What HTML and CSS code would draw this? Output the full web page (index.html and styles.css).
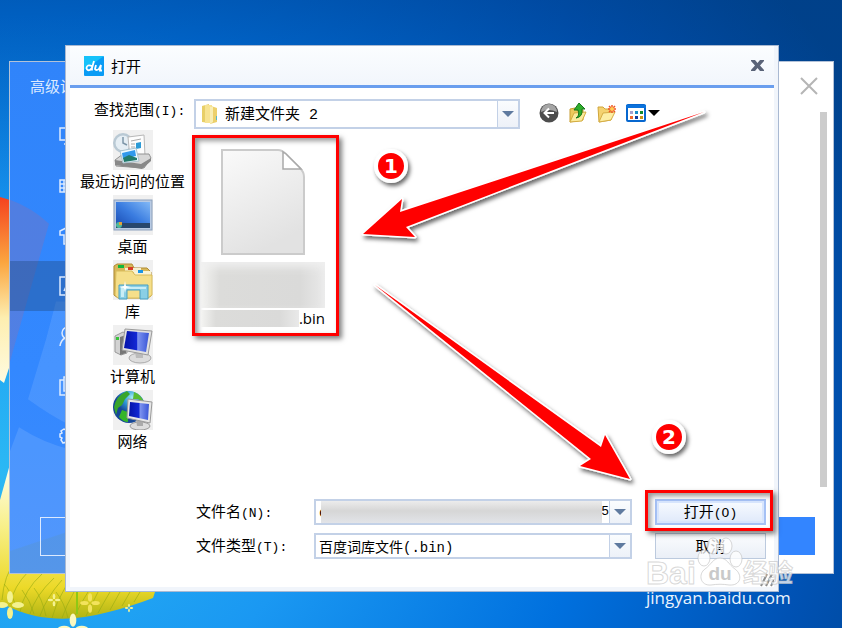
FILE: index.html
```html
<!DOCTYPE html>
<html lang="zh-CN">
<head>
    <meta charset="UTF-8">
    <meta name="viewport" content="width=device-width, initial-scale=1.0">
    <title>打开</title>
    <link rel="stylesheet" href="styles.css">
</head>
<body>
    <!-- Wallpaper -->
    <svg class="wallpaper" viewBox="0 0 842 628" preserveAspectRatio="xMinYMin meet" aria-hidden="true">
        <defs>
            <linearGradient id="flame" x1="0" y1="0" x2="0" y2="1">
                <stop offset="0" stop-color="#f5421f"/>
                <stop offset=".35" stop-color="#fba53f"/>
                <stop offset=".65" stop-color="#fdeeb0"/>
                <stop offset="1" stop-color="#fffbe0"/>
            </linearGradient>
            <linearGradient id="grass" x1="0" y1="0" x2="0" y2="1">
                <stop offset="0" stop-color="#fffef0"/>
                <stop offset=".4" stop-color="#f8f08a"/>
                <stop offset=".8" stop-color="#ecd928"/>
                <stop offset="1" stop-color="#b0b414"/>
            </linearGradient>
            <g id="flower">
                <ellipse cy="-8" rx="3" ry="6"/>
                <ellipse cy="8" rx="3" ry="6"/>
                <ellipse cx="-8" rx="6" ry="3"/>
                <ellipse cx="8" rx="6" ry="3"/>
            </g>
        </defs>
        <path d="M0 197Q30 205 49 223L10 365L4 383L0 380Z" fill="url(#flame)"/>
        <path d="M0 500L10 464L70 500L155 592L153 598C120 610 80 622 50 618C25 616 8 606 0 603Z" fill="url(#grass)"/>
        <g fill="none" stroke="#96aa12" stroke-width="1" opacity=".6">
            <path d="M2 600Q4 575 16 560M10 604Q14 586 28 572M20 612Q24 590 42 574M30 614Q35 596 54 578M40 616Q46 598 62 580M52 618Q56 602 66 586M62 618Q66 606 74 592M74 618Q80 604 88 592M86 616Q92 604 98 592M98 613Q104 602 110 592M110 610Q115 601 120 592M122 606L130 592M134 602L140 592M16 606Q10 590 4 584M34 614Q30 600 22 590M46 616Q42 598 34 588M68 618Q64 602 56 592"/>
        </g>
        <path d="M77 592V614" stroke="#8fc814" stroke-width="2"/>
        <g fill="#f4f290">
            <use href="#flower" x="10" y="605"/>
            <use href="#flower" fill="#f3e35c" transform="translate(90 603) scale(.7)"/>
            <use href="#flower" transform="translate(54 600) scale(.45)"/>
            <use href="#flower" transform="translate(129 608) scale(.3)"/>
            <use href="#flower" fill="#faf8c0" transform="translate(73 629) scale(1.1)"/>
        </g>
    </svg>

    <!-- Settings window behind the dialog -->
    <div class="settings">
        <div class="settings-side">
            <svg class="side-pattern" viewBox="0 0 150 512" preserveAspectRatio="none" aria-hidden="true">
                <path d="M0 138Q22 146 39 162L0 300Z" fill="#f05a5a" opacity=".16"/>
                <path d="M36 278L18 338Q40 354 60 364V240H46Z" fill="#fff" opacity=".1"/>
                <path d="M9 366Q34 382 60 388V512H0V390Z" fill="#fff" opacity=".11"/>
                <path d="M0 490L60 470V512H0Z" fill="#6c9860" opacity=".12"/>
            </svg>
            <h2>高级设置</h2>
            <nav>
                <a href="#" aria-label="常规"><svg viewBox="0 0 20 20"><rect x="1" y="2" width="18" height="12"/><path d="M7 18L9 14M5 18H15"/></svg></a>
                <a href="#" aria-label="按键"><svg viewBox="0 0 20 20"><rect x="1" y="4" width="18" height="12"/><path d="M1 8H19M1 12H19M5 4V16M10 4V16M15 4V16"/></svg></a>
                <a href="#" aria-label="皮肤"><svg viewBox="0 0 20 20"><path d="M7 2L1 5V9H5V18H15V9H19V5L13 2Q10 5 7 2Z"/></svg></a>
                <a href="#" aria-label="词库" class="active"><svg viewBox="0 0 20 20"><rect x="1" y="1" width="18" height="18"/><path d="M5 15L10 4L15 15M7 11H13"/></svg></a>
                <a href="#" aria-label="账户"><svg viewBox="0 0 20 20"><circle cx="9" cy="7" r="6"/><path d="M1 20Q2 14 6 12M17 20Q16 14 12 12"/></svg></a>
                <a href="#" aria-label="辅助"><svg viewBox="0 0 20 20"><path d="M5 4H1V19H15V15"/><rect x="5" y="1" width="13" height="14"/></svg></a>
                <a href="#" aria-label="高级"><svg viewBox="0 0 20 20"><path d="M7 1H13V4L16 6L19 8V12L16 14V17L13 19H7V16L4 17L2 14L3 12L1 11V8L3 7L2 5L5 3L7 4Z"/></svg></a>
            </nav>
            <button type="button" class="side-button" aria-label="恢复默认"></button>
        </div>
        <div class="settings-main">
            <button type="button" class="settings-close" aria-label="关闭">
                <svg viewBox="0 0 18 18"><path d="M1 1L17 17M17 1L1 17"/></svg>
            </button>
            <div class="scrollbar"></div>
            <button type="button" class="settings-ok" aria-label="确定"></button>
        </div>
    </div>

    <!-- Open file dialog -->
    <form class="dialog" onsubmit="return false">
        <header class="titlebar">
            <svg class="logo" viewBox="0 0 20 20" aria-hidden="true">
                <rect width="20" height="20" rx="1" fill="#0a9cf5"/>
                <path d="M0 0H20L0 14Z" fill="#16c2fa"/>
                <g fill="none" stroke="#fff" stroke-width="1.8">
                    <path d="M8 10Q3 8 2.500 12Q3 15 6 14L8 12L10 5M8 10V14.500"/>
                    <path d="M12 9L11 13Q12 15 15 13L17 9L16 14.500H18"/>
                </g>
            </svg>
            <h1>打开</h1>
            <button type="button" class="close" aria-label="关闭">
                <svg viewBox="0 0 13 11"><path d="M0 0H4L6.500 3L9 0H13V1L9 5.500L13 10V11H9L6.500 8L4 11H0V10L4 5.500L0 1Z"/></svg>
            </button>
        </header>

        <div class="lookin">
            <label for="folder">查找范围<span class="key">(I):</span></label>
            <div class="combo">
                <svg class="folder" viewBox="0 0 18 20" aria-hidden="true">
                    <path d="M1 2L8 0V19L1 18Z" fill="#e8cf68"/>
                    <path d="M4 1H11V19H4Z" fill="#f7e392"/>
                    <path d="M10 2L16 4V18L9 20Z" fill="#ecd06c"/>
                    <path d="M9 3L12 2V18L9 20Z" fill="#f8edb4"/>
                    <path d="M15 12H16V16H15Z" fill="#57b7c9"/>
                </svg>
                <select id="folder"><option>新建文件夹 2</option></select>
                <span class="arrow"></span>
            </div>
            <div class="tools">
                <button type="button" aria-label="后退">
                    <svg viewBox="0 0 20 20">
                        <circle cx="10" cy="10" r="9.500" fill="#4d4d4d"/>
                        <path d="M2 9A8 8 0 0 1 18 9Q10 5 2 9Z" fill="#a5a5a5"/>
                        <path d="M15 10H6M10 5.500L5.500 10L10 14.500" fill="none" stroke="#fff" stroke-width="2"/>
                    </svg>
                </button>
                <button type="button" aria-label="向上一级">
                    <svg viewBox="0 0 20 20">
                        <path d="M2 6L7 5L8 7H15V17L2 19Z" fill="#edc95b" stroke="#c79d32"/>
                        <path d="M2 19L6 10L18 9L14 18Z" fill="#fbeb9d" stroke="#d3ac40"/>
                        <path d="M8 15Q12 13 10 7H6L11 0L17 6H14Q15 14 8 15Z" fill="#2fae2c" stroke="#16751a"/>
                    </svg>
                </button>
                <button type="button" aria-label="新建文件夹">
                    <svg viewBox="0 0 20 20">
                        <path d="M1 4H6L8 6H14V17L2 19Z" fill="#f4d270" stroke="#d0a53a"/>
                        <path d="M2 19L6 10L18 9L14 17Z" fill="#fdeea4" stroke="#d6ae45"/>
                        <path d="M15 2V10M11 6H19M12 3L18 9M18 3L12 9" stroke="#ef5521" stroke-width="1.500"/>
                        <circle cx="15" cy="6" r="2" fill="#ffcd55"/>
                    </svg>
                </button>
                <button type="button" class="view" aria-label="查看">
                    <svg viewBox="0 0 20 20">
                        <rect x="1" y="2" width="18" height="16" rx="1" fill="#fff" stroke="#0767cf" stroke-width="2"/>
                        <path d="M0 2H20V5H0Z" fill="#0b72dc"/>
                        <path d="M4 8H7V11H4Z" fill="#a6a0cd"/><path d="M9 8H12V11H9Z" fill="#178cc8"/><path d="M14 8H17V11H14Z" fill="#138a31"/>
                        <path d="M4 13H7V16H4Z" fill="#f0682d"/><path d="M9 13H12V16H9Z" fill="#123a9e"/><path d="M14 13H17V16H14Z" fill="#c9951d"/>
                    </svg>
                    <span class="caret"></span>
                </button>
            </div>
        </div>

        <div class="browser">
            <nav class="places">
                <a href="#">
                    <svg viewBox="0 0 40 40">
                        <circle cx="10" cy="13" r="10" fill="#b9c9d4"/><circle cx="10" cy="13" r="7.500" fill="#e5eef4"/>
                        <path d="M10 7V13L14 15" fill="none" stroke="#7d96a8" stroke-width="1.500"/>
                        <path d="M15 7L31 5L32 26L17 28Z" fill="#fdfdfd" stroke="#b8b8b8"/>
                        <path d="M18 11L28 9M18 14H22M18 17H22" stroke="#aaa"/>
                        <path d="M23 13L28 12V18L23 19Z" fill="#2d9bd6"/>
                        <path d="M2 30L10 24H36L38 28L31 38L3 36Z" fill="#d7d7d7" stroke="#929292"/>
                        <path d="M2 30L28 34L38 28V31L29 39L2 35Z" fill="#888"/>
                        <path d="M7 21L23 18L26 31L10 33Z" fill="#effaff" stroke="#a9c3d0"/>
                        <path d="M9 23L22 20L23 26L10 29Z" fill="#3199ec"/><path d="M10 28L16 25L24 28V30L11 32Z" fill="#217b6c"/>
                    </svg>
                    最近访问的位置
                </a>
                <a href="#">
                    <svg viewBox="0 0 40 40">
                        <defs><linearGradient id="desk" x1="0" y1="1" x2="1" y2="0"><stop offset="0" stop-color="#1648b0"/><stop offset=".5" stop-color="#3a7ce0"/><stop offset="1" stop-color="#81b8f6"/></linearGradient></defs>
                        <rect x="1" y="5" width="38" height="30" fill="#b9cbe4" stroke="#8ea2bd"/>
                        <rect x="3" y="7" width="34" height="26" fill="url(#desk)"/>
                        <path d="M3 28H37V33H3Z" fill="#28476d"/>
                        <circle cx="6" cy="30" r="3" fill="#4fb99b"/><path d="M6 27H9V30H6Z" fill="#e1a33c"/>
                    </svg>
                    桌面
                </a>
                <a href="#">
                    <svg viewBox="0 0 40 40">
                        <path d="M1 6L4 4H19L21 8H34L38 12V36L34 38H5L1 35Z" fill="#d7b75a" stroke="#b18c32"/>
                        <path d="M5 5H11V8H5Z" fill="#12b83c"/><path d="M12 8H28V12H12Z" fill="#f5efcf"/><path d="M15 7H20V10H15Z" fill="#d83c25"/>
                        <path d="M21 11H38V15H21Z" fill="#f9f3d4"/><path d="M25 10H30V13H25Z" fill="#1a95e5"/>
                        <path d="M3 11L19 11L22 15H39V35L35 38H5L2 35Z" fill="#f5df8a" stroke="#d8bb5b"/>
                        <path d="M6 25H35V39H27V30H14V39H6Z" fill="#8acfe5" stroke="#499fc1"/>
                        <path d="M8 27H33V29H11V37H8Z" fill="#c9edf6"/>
                        <path d="M12 21L13 26L18 27L13 28L12 33L11 28L6 27L11 26Z" fill="#fff"/>
                    </svg>
                    库
                </a>
                <a href="#">
                    <svg viewBox="0 0 40 40">
                        <defs><linearGradient id="screen" x1="0" y1="0" x2="1" y2="0"><stop offset="0" stop-color="#0513a8"/><stop offset=".5" stop-color="#1228d4"/><stop offset=".55" stop-color="#7d93ef"/><stop offset="1" stop-color="#3855d7"/></linearGradient></defs>
                        <path d="M2 11L10 7L14 9V28L8 30L2 27Z" fill="#d2d2d2" stroke="#999"/>
                        <path d="M7 12L13 10V28L7 30Z" fill="#777"/><path d="M3 12H6V15H3Z" fill="#39c43a"/>
                        <ellipse cx="27" cy="33" rx="11" ry="5" fill="#ddd" stroke="#aaa"/>
                        <path d="M22 27H30V33H23Z" fill="#bbb"/>
                        <path d="M12 4L39 6L35 30L9 25Z" fill="#e1e1e1" stroke="#9a9a9a"/>
                        <path d="M14 6L36 8L33 27L11 23Z" fill="url(#screen)"/>
                    </svg>
                    计算机
                </a>
                <a href="#">
                    <svg viewBox="0 0 40 40">
                        <defs><radialGradient id="globe" cx=".6" cy=".2"><stop offset="0" stop-color="#a4edf4"/><stop offset=".5" stop-color="#2f9bd8"/><stop offset="1" stop-color="#164796"/></radialGradient></defs>
                        <circle cx="16" cy="17" r="16" fill="url(#globe)"/>
                        <path d="M1 17Q3 6 14 1L17 4L12 9L9 15L5 18L3 25Z" fill="#38a52b"/><path d="M21 2Q29 5 31 13L25 9L20 9Z" fill="#5abc32"/><path d="M9 20L15 22V32Q10 32 6 27Z" fill="#36b529"/>
                        <ellipse cx="27" cy="36" rx="10" ry="4" fill="#ddd" stroke="#999"/><path d="M23 29H30V36H24Z" fill="#aaa"/>
                        <path d="M15 9L39 12L37 33L14 28Z" fill="#e7e7e7" stroke="#999"/><path d="M17 12L36 14L35 30L16 26Z" fill="url(#screen)"/>
                    </svg>
                    网络
                </a>
            </nav>
            <div class="files">
                <button type="button" class="file">
                    <svg viewBox="0 0 86 108" aria-hidden="true">
                        <defs><linearGradient id="paper" x1="0" y1="0" x2=".4" y2="1"><stop offset="0" stop-color="#fafafa"/><stop offset="1" stop-color="#e2e2e2"/></linearGradient></defs>
                        <path d="M2 2H58Q62 2 66 6L80 20Q84 24 84 29V106H2Z" fill="url(#paper)" stroke="#cbcbcb" stroke-width="2"/>
                        <path d="M63 4V21H81Q79 19 66 6Z" fill="#fff" stroke="#a9a9a9" stroke-width="1.500"/>
                    </svg>
                    <span class="smudge smudge-name"></span>
                    <span class="file-end"><span class="smudge"></span>.bin</span>
                </button>
            </div>
        </div>

        <div class="fields">
            <label for="filename">文件名<span class="key">(N):</span></label>
            <div class="combo">
                <input type="text" id="filename" value="c">
                <span class="tail">25</span>
                <span class="smudge-input"></span>
                <span class="arrow"></span>
            </div>
            <div class="open-cell">
                <button type="submit" class="btn btn-open">打开<span class="key">(O)</span></button>
                <span class="frame"></span>
            </div>
            <label for="filetype">文件类型<span class="key">(T):</span></label>
            <div class="combo">
                <select id="filetype"><option>百度词库文件(.bin)</option></select>
                <span class="arrow"></span>
            </div>
            <button type="button" class="btn">取消</button>
        </div>
        <svg class="grip" viewBox="0 0 14 14" aria-hidden="true"><path d="M1 13L7 1M6 13L12 1M11 13L14 7"/></svg>
    </form>

    <!-- Arrows, step numbers and watermark -->
    <svg class="notes" viewBox="0 0 842 628" preserveAspectRatio="xMinYMin meet">
        <defs>
            <filter id="drop" x="-20%" y="-20%" width="140%" height="140%">
                <feDropShadow dx="2" dy="3" stdDeviation="2" flood-color="#000" flood-opacity=".6"/>
            </filter>
        </defs>
        <g class="arrows" filter="url(#drop)">
            <path d="M363 234L402 199L400 212L704 112L406 227L415 237Z"/>
            <path d="M375 285L601 447L605 435L630 479L580 466L591 459Z"/>
        </g>
        <g filter="url(#drop)">
            <circle cx="391" cy="166" r="15" fill="#f00" stroke="#fff" stroke-width="4"/>
            <circle cx="669" cy="437" r="15" fill="#f00" stroke="#fff" stroke-width="4"/>
        </g>
        <g class="step">
            <text x="391" y="173">1</text>
            <text x="669" y="444">2</text>
        </g>
        <g class="mark">
            <text class="brand" x="646" y="584">Bai</text>
            <ellipse cx="704" cy="558" rx="6" ry="8"/>
            <ellipse cx="713" cy="546" rx="6" ry="8"/>
            <ellipse cx="726" cy="546" rx="6" ry="8"/>
            <ellipse cx="736" cy="559" rx="6" ry="8"/>
            <path d="M720 558C713 558 711 565 705 569C698 574 700 586 711 585C717 584 723 584 729 585C741 586 743 575 735 569C729 565 727 558 720 558Z"/>
            <text class="brand-cn" x="743" y="582">经验</text>
        </g>
        <text class="brand-du" x="720" y="580">du</text>
        <text class="site" x="646" y="604">jingyan.baidu.com</text>
    </svg>
</body>
</html>
```
FILE: styles.css
```css
* {
    box-sizing: border-box;
}
body {
    margin: 0;
    min-height: 100vh;
    position: relative;
    overflow: hidden;
    font-family: "Noto Sans CJK SC", sans-serif;
    font-size: 15px;
    line-height: 20px;
    color: #000;
    background:
        linear-gradient(rgba(0, 60, 130, 0.35), transparent 35%),
        radial-gradient(ellipse 900px 700px at 0 75%, #2bb8f4 0%, #1a98f2 35%, #0070de 65%, #0052b4 90%, #00438e 110%);
}
h1, h2 {
    margin: 0;
    font-size: 15px;
    font-weight: normal;
}
button, input, select {
    margin: 0;
    padding: 0;
    border: none;
    background: none;
    font: inherit;
    color: inherit;
}
a {
    color: inherit;
    text-decoration: none;
}
svg {
    display: block;
}
.wallpaper, .notes {
    position: absolute;
    top: 0;
    left: 0;
    width: 100%;
    height: 100%;
}
.notes {
    pointer-events: none;
}

/* settings window */
.settings {
    position: absolute;
    inset: 61px 8px 54px 9px;
    display: flex;
    border: 1px solid #b3c2d8;
    background: #fff;
}
.settings-side {
    position: relative;
    width: 150px;
    display: flex;
    flex-direction: column;
    background: linear-gradient(#3084fa, #3388ff 60%, #3d8bfc);
    color: #dceaff;
}
.side-pattern {
    position: absolute;
    inset: 0;
    width: 100%;
    height: 100%;
}
.settings-side h2 {
    padding: 14px 0 15px 20px;
}
.settings-side nav a {
    display: flex;
    align-items: center;
    height: 50px;
    padding-left: 49px;
    position: relative;
}
.settings-side nav a.active {
    background: rgba(32, 75, 130, 0.4);
}
.settings-side nav svg {
    width: 20px;
    height: 20px;
    fill: none;
    stroke: #dceaff;
    stroke-width: 1.5;
}
.side-button {
    height: 39px;
    margin: auto 30px 17px;
    border: 1px solid #dceaff;
    position: relative;
}
.settings-main {
    flex: 1;
    display: flex;
    flex-direction: column;
    align-items: flex-end;
}
.settings-close {
    margin: 15px 15px 0 0;
}
.settings-close svg {
    width: 18px;
    height: 18px;
    fill: none;
    stroke: #b5b5b5;
    stroke-width: 2;
}
.scrollbar {
    flex: 1;
    width: 7px;
    margin: 17px 6px 30px 0;
    background: #ccc;
}
.settings-ok {
    width: 120px;
    height: 38px;
    margin: 0 18px 18px 0;
    background: #3385ff;
}

/* dialog */
.dialog {
    position: absolute;
    inset: 45px 63px 36px 65px;
    display: flex;
    flex-direction: column;
    border: 1px solid #a9b9d2;
    background: #fff;
    box-shadow: inset 0 0 0 4px #f1f5fb;
}
.titlebar {
    display: flex;
    align-items: center;
    gap: 7px;
    height: 42px;
    margin: 0 4px;
    padding: 0 10px 0 14px;
    border-bottom: 3px solid #6a9eee;
    background: linear-gradient(#fbfdff, #f2f6fc);
}
.logo {
    width: 20px;
    height: 20px;
}
.close {
    margin-left: auto;
}
.close svg {
    width: 13px;
    height: 11px;
    fill: #5a6378;
}
.key {
    font-family: "Liberation Mono", monospace;
    font-size: 13px;
}
.lookin {
    display: flex;
    margin: 11px 4px 0 28px;
}
.lookin label {
    width: 100px;
}
.combo {
    position: relative;
    display: flex;
    align-items: center;
    min-width: 0;
    border: 2px solid #c3d1e7;
    background: #fff;
    font-family: "Liberation Mono", "Noto Sans CJK SC", monospace;
}
.lookin .combo {
    flex: 1;
    height: 30px;
}
.folder {
    width: 18px;
    height: 20px;
    margin: 0 6px 0 5px;
}
.combo select, .combo input {
    flex: 1;
    min-width: 0;
    height: 100%;
    padding: 3px 3px 0;
    appearance: none;
    outline: none;
}
.folder + select {
    padding: 3px 0 0;
}
.fields select {
    font-size: 14px;
}
.arrow {
    display: flex;
    align-items: center;
    justify-content: center;
    align-self: stretch;
    width: 21px;
    border-left: 1px solid #c3d1e7;
    background: linear-gradient(#fafcfe, #edf1f8);
    pointer-events: none;
}
.arrow::before {
    content: "";
    border: 6px solid transparent;
    border-top-color: #5f7a9f;
    border-bottom: none;
}
.tools {
    display: flex;
    align-items: center;
    gap: 9px;
    width: 254px;
    padding: 0 0 2px 19px;
}
.tools svg {
    width: 20px;
    height: 20px;
}
.tools .view {
    display: flex;
    align-items: center;
    gap: 2px;
}
.caret {
    border: 6px solid transparent;
    border-top-color: #000;
    border-bottom: none;
}
.browser {
    flex: 1;
    display: flex;
    margin: 1px 4px 0;
}
.places {
    width: 122px;
    padding-left: 3px;
}
.places a {
    display: flex;
    flex-direction: column;
    align-items: center;
    gap: 1px;
    height: 65px;
    white-space: nowrap;
}
.places svg {
    width: 40px;
    height: 40px;
    background: #f0f0f0;
}
.files {
    padding-top: 5px;
}
.file {
    display: flex;
    flex-direction: column;
    align-items: center;
    width: 147px;
    height: 201px;
    padding: 10px 9px 0 4px;
    border: 3px solid #f00;
    box-shadow: 3px 3px 5px rgba(0, 0, 0, 0.5), inset 3px 3px 5px rgba(0, 0, 0, 0.4);
}
.file svg {
    width: 86px;
    height: 108px;
}
.smudge {
    background: linear-gradient(90deg, #f4f4f2, #dcdcda 15%, #dadad9 80%, #e9e9e9);
}
.smudge-name {
    width: 124px;
    height: 46px;
    margin: 6px 0 2px;
    box-shadow: inset 0 5px 8px #f0f0f0;
}
.file-end {
    display: flex;
    width: 124px;
    line-height: 17px;
    font-family: "Open Sans", sans-serif;
}
.file-end .smudge {
    flex: 1;
}
.fields {
    display: grid;
    grid-template-columns: 110px 1fr 111px;
    grid-auto-rows: 26px;
    gap: 8px;
    margin: 0 12px 32px 130px;
    align-items: center;
}
.fields .combo {
    height: 26px;
    margin-right: 15px;
}
.smudge-input {
    position: absolute;
    left: 5px;
    right: 28px;
    top: 0;
    bottom: 0;
    background: linear-gradient(#ececec, #d6d6d6 45%, #e2e4e8);
}
.tail {
    font-size: 13px;
}
.btn {
    width: 100%;
    height: 26px;
    border: 1px solid #bccade;
    background: linear-gradient(#fbfcfe, #eaeff7);
}
.open-cell {
    position: relative;
}
.btn-open {
    display: block;
    border: 2px solid #a5c1f5;
    background: linear-gradient(#f8fbff, #dfe9fa);
    box-shadow: inset 0 0 0 2px #d7e5fd;
}
.frame {
    position: absolute;
    inset: -9px -7px -6px -10px;
    border: 3px solid #f00;
    box-shadow: 3px 3px 5px rgba(0, 0, 0, 0.5), inset 3px 3px 5px rgba(0, 0, 0, 0.4);
    pointer-events: none;
}
.grip {
    position: absolute;
    right: 4px;
    bottom: 4px;
    width: 14px;
    height: 14px;
    fill: none;
    stroke: #8b8b8b;
    stroke-width: 2;
}

/* notes */
.arrows {
    fill: #f00;
    stroke: #fff;
    stroke-width: 3;
    stroke-linejoin: round;
    paint-order: stroke;
}
.step {
    font: bold 20px "DejaVu Sans", sans-serif;
    text-anchor: middle;
    fill: #fff;
}
.mark {
    fill: rgba(255, 255, 255, 0.75);
    stroke: rgba(190, 190, 190, 0.6);
    stroke-width: 1;
}
.brand {
    font: bold 32px "Liberation Sans", sans-serif;
}
.brand-cn {
    font: bold 25px "Noto Sans CJK SC", sans-serif;
}
.brand-du {
    font: bold 19px "Liberation Sans", sans-serif;
    text-anchor: middle;
    fill: #c9c9c9;
}
.site {
    font: 17px "Open Sans", sans-serif;
    fill: #eaf3fd;
}
```
